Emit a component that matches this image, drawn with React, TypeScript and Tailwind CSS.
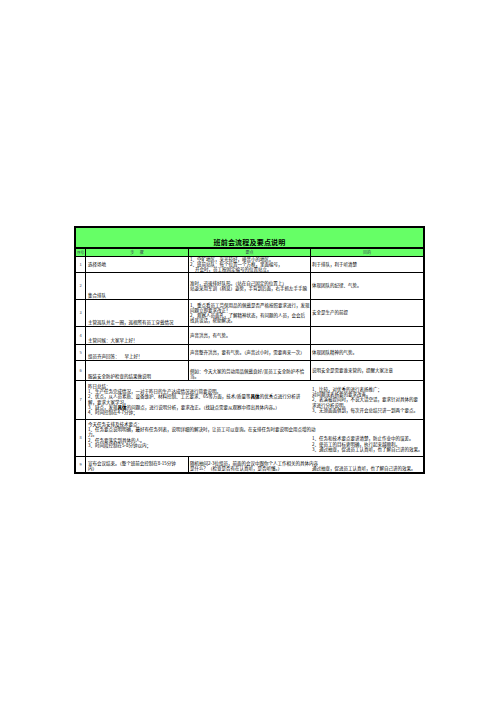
import React from "react";

type CellProps = {
  lines?: React.ReactNode[];
  className?: string;
};

// one spreadsheet cell, lines are written out the way the sheet wraps them
const Cell: React.FC<CellProps> = ({ lines = [], className = "" }) => (
  <div className={`flex flex-col border-black px-[1px] overflow-visible ${className}`}>
    {lines.map((line, i) => (
      <div key={i} className="h-[5.2px] whitespace-pre">
        {line}
      </div>
    ))}
  </div>
);

const No: React.FC<{ n: number; last?: boolean }> = ({ n, last }) => (
  <div
    className={`flex items-center justify-center border-r border-black text-[4px] text-gray-700 ${
      last ? "" : "border-b"
    }`}
  >
    {n}
  </div>
);

// pieces of a line that holds a bold word, kept to the line's height
const T = ({ children }: { children: React.ReactNode }) => (
  <span className="inline-block h-[5.2px] leading-[5.2px]">{children}</span>
);

const B = ({ children }: { children: React.ReactNode }) => (
  <span className="inline-block h-[5.2px] font-black text-[4.6px] leading-[5.2px]">
    {children}
  </span>
);

const App: React.FC = () => {
  return (
    <div className="min-h-[702px] w-full bg-white pt-[226px] pl-[74px] font-['Noto_Sans_CJK_SC',sans-serif] text-black">
      <div className="w-[351px] border-2 border-black text-[4.5px] leading-[5.2px]">
        <div className="grid grid-cols-[10px_103px_122px_112px] grid-rows-[21px_8px_16px_27px_27px_18px_16px_20px_39px_37px_15px]">
          {/* title */}
          <div className="col-span-4 flex items-end justify-center border-b-2 border-black bg-[#66ff66] pb-[1px]">
            <span className="font-bold text-[7px] leading-[8px] tracking-[0.2px]">
              班前会流程及要点说明
            </span>
          </div>

          {/* header */}
          <div className="flex items-center justify-center border-b border-r border-black bg-[#66ff66] text-[3.6px] leading-[4px] text-gray-700 whitespace-nowrap">
            序号
          </div>
          <div className="flex items-center justify-center border-b border-r border-black bg-[#66ff66] text-[4px] text-gray-700 whitespace-pre">
            步      骤
          </div>
          <div className="flex items-center justify-center border-b border-r border-black bg-[#66ff66] text-[4px] text-gray-700">
            要点
          </div>
          <div className="flex items-center justify-center border-b border-black bg-[#66ff66] text-[4px] text-gray-700">
            目的
          </div>

          {/* 1 */}
          <No n={1} />
          <Cell className="justify-center border-b border-r pl-[2px]" lines={["选择场地"]} />
          <Cell
            className="justify-center border-b border-r"
            lines={[
              "1、空旷地区，采光较好，噪音小的地区。",
              "2、班前站队：每个位置一个方框，里面编号，",
              "     开会时，员工按固定编号的位置站立。",
            ]}
          />
          <Cell className="justify-center border-b" lines={["利于排队，利于听清楚"]} />

          {/* 2 */}
          <No n={2} />
          <Cell className="justify-end border-b border-r pl-[2px] pb-[1px]" lines={["集合排队"]} />
          <Cell
            className="justify-center border-b border-r"
            lines={[
              "准时，迅速排好队形。（站在自己固定的位置上）",
              "站姿采用军训（稍息）姿势，手背到后面，右手抓左手手腕",
            ]}
          />
          <Cell className="justify-center border-b" lines={["体现团队的纪律、气势。"]} />

          {/* 3 */}
          <No n={3} />
          <Cell
            className="justify-end border-b border-r pl-[2px] pb-[1px]"
            lines={["主管巡队并走一圈，巡视所有员工穿戴情况"]}
          />
          <Cell
            className="justify-center border-b border-r"
            lines={[
              "1、重点看员工劳保用品的佩戴是否严格按照要求进行，发现",
              "问题立即要求改正！",
              "2、观察人员面孔，了解精神状态，有问题的人员，会会后",
              "找其谈话，帮助解决。",
            ]}
          />
          <Cell className="justify-center border-b" lines={["安全是生产的前提"]} />

          {/* 4 */}
          <No n={4} />
          <Cell
            className="justify-end border-b border-r pl-[2px] pb-[1px]"
            lines={["主管问候：大家早上好！"]}
          />
          <Cell className="justify-center border-b border-r" lines={["声音洪亮，有气势。"]} />
          <Cell className="border-b" />

          {/* 5 */}
          <No n={5} />
          <Cell
            className="justify-end border-b border-r pl-[2px] pb-[1px]"
            lines={["组员齐声回答：     早上好！"]}
          />
          <Cell
            className="justify-center border-b border-r"
            lines={["声音整齐洪亮，要有气势。（声音过小时，需要再来一次）"]}
          />
          <Cell className="justify-center border-b" lines={["体现团队精神的气势。"]} />

          {/* 6 */}
          <No n={6} />
          <Cell
            className="justify-end border-b border-r pl-[2px] pb-[1px]"
            lines={["服装安全防护检查的结果做说明"]}
          />
          <Cell
            className="justify-end border-b border-r pb-[1px]"
            lines={["例如：今天大家的劳动用品佩戴良好/某员工安全防护不恰", "当。"]}
          />
          <Cell
            className="justify-center border-b"
            lines={["说明安全是需要谁来管的，提醒大家注意"]}
          />

          {/* 7 */}
          <No n={7} />
          <Cell
            className="col-span-2 justify-start border-b pl-[2px] pt-[3px]"
            lines={[
              "昨日总结：",
              "1、生产任务完成情况，一对于昨日的生产达成情况进行简要说明。",
              <>
                <T>2、优点，从人员素质、设备维护、材料控制、工艺要求、6S等方面，技术/质量等</T>
                <B>具体</B>
                <T>的优秀点进行分析讲</T>
              </>,
              "解，要求大家学习。",
              <>
                <T>3、缺点，发现</T>
                <B>具体</B>
                <T>的问题点，进行说明分析，要求改正。（找缺点需要从观察中得出具体内容。）</T>
              </>,
              "4、时间控制在4-7分钟；",
            ]}
          />
          <Cell
            className="justify-center border-b"
            lines={[
              "1、比较，对优秀的进行表扬推广；",
              "对问题或表扬要的要求改善。",
              "2、表演被提问时，不说大话空话，要求针对具体的要",
              "求进行分析说明。",
              "3、无须面面俱到，每次开会总结只讲一到两个要点。",
            ]}
          />

          {/* 8 */}
          <No n={8} />
          <Cell
            className="col-span-2 justify-start border-b pl-[2px] pt-[2px]"
            lines={[
              "今天任务安排及技术要点：",
              "1、任务要点说明明确，最好有任务列表，说明详细的解决时，让员工可以查询。在安排任务时要说明会用点增的动",
              "力。",
              "2、任务要落实到具体的人。",
              "3、时间段控制在5-8分钟以内；",
            ]}
          />
          <Cell
            className="justify-end border-b pb-[4px]"
            lines={[
              "1、任务和技术要点要讲清楚，防止作业中的误差。",
              "2、使员工的目标更明确，执行起来越顺利。",
              "3、通过抽查，促进员工认真听，也了解自己讲的效果。",
            ]}
          />

          {/* 9 */}
          <No n={9} last />
          <Cell
            className="justify-end border-r pl-[2px] pb-[0.5px]"
            lines={["宣布会议结束。（整个班前会控制在8-15分钟", "内）"]}
          />
          <Cell
            className="justify-end pb-[0.5px]"
            lines={[
              "随机抽问2-3位组员，前面的会议中跟你个人工作相关的具体内容",
              "是什么？（检查是否有在认真听，是否听懂。）",
            ]}
          />
          <Cell
            className="justify-end pb-[0.5px]"
            lines={["通过抽查，促进员工认真听，也了解自己讲的效果。"]}
          />
        </div>
      </div>
    </div>
  );
};

export default App;
